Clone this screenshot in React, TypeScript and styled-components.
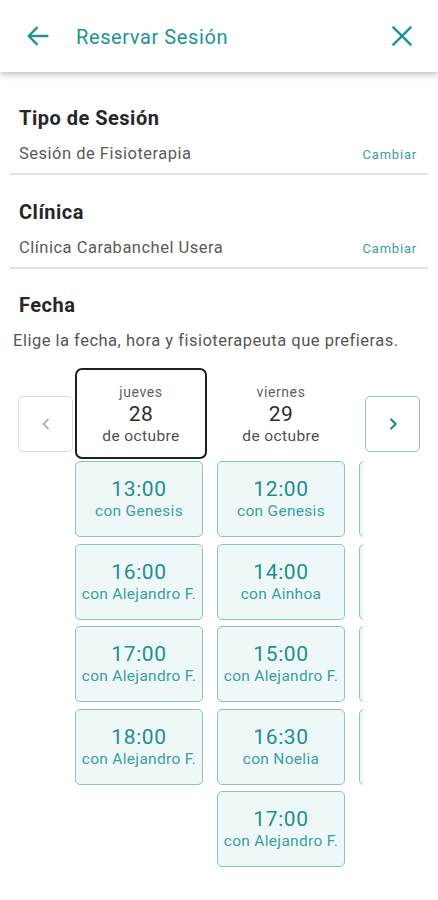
import styled, { createGlobalStyle } from "styled-components"

const GlobalStyle = createGlobalStyle`
body{
    margin: 0;
    background: #ffffff;
    font-family: Roboto, "Noto Sans", Arial, sans-serif;
}
`

type Slot = { time: string; who: string }
type Day = { weekday: string; num: string; month: string; slots: Slot[] }

const days: Day[] = [
    {
        weekday: "jueves", num: "28", month: "de octubre",
        slots: [
            { time: "13:00", who: "con Genesis" },
            { time: "16:00", who: "con Alejandro F." },
            { time: "17:00", who: "con Alejandro F." },
            { time: "18:00", who: "con Alejandro F." },
        ],
    },
    {
        weekday: "viernes", num: "29", month: "de octubre",
        slots: [
            { time: "12:00", who: "con Genesis" },
            { time: "14:00", who: "con Ainhoa" },
            { time: "15:00", who: "con Alejandro F." },
            { time: "16:30", who: "con Noelia" },
            { time: "17:00", who: "con Alejandro F." },
        ],
    },
]

// the next day only peeks in at the right edge, so just its boxes
const peekSlots = 4

const App = () => {
    return (
        <Page>
            <GlobalStyle />
            <Header>
                <IconBtn>
                    <svg width="28" height="28" viewBox="0 0 24 24" fill="none" stroke="#1b9590" strokeWidth="2.1" strokeLinecap="round" strokeLinejoin="round">
                        <path d="M20 12H4.5" />
                        <path d="M11 5l-7 7 7 7" />
                    </svg>
                </IconBtn>
                <Title>Reservar Sesión</Title>
                <IconBtn>
                    <svg width="26" height="26" viewBox="0 0 24 24" fill="none" stroke="#1b9590" strokeWidth="2.2" strokeLinecap="round">
                        <path d="M4 4l16 16M20 4L4 20" />
                    </svg>
                </IconBtn>
            </Header>

            <Section $first>
                <SectionTitle>Tipo de Sesión</SectionTitle>
                <ValueRow>
                    <Value>Sesión de Fisioterapia</Value>
                    <Change>Cambiar</Change>
                </ValueRow>
            </Section>

            <Section>
                <SectionTitle>Clínica</SectionTitle>
                <ValueRow>
                    <Value>Clínica Carabanchel Usera</Value>
                    <Change>Cambiar</Change>
                </ValueRow>
            </Section>

            <DateSection>
                <SectionTitle>Fecha</SectionTitle>
                <Hint>Elige la fecha, hora y fisioterapeuta que prefieras.</Hint>
            </DateSection>

            <Picker>
                <NavBtn $active={false}>
                    <svg width="16" height="16" viewBox="0 0 24 24" fill="none" stroke="#a8a8a8" strokeWidth="2.6" strokeLinecap="round" strokeLinejoin="round">
                        <path d="M15 5l-7 7 7 7" />
                    </svg>
                </NavBtn>
                <Viewport>
                    {days.map((d, i) => (
                        <Column key={d.num}>
                            <DayHead $selected={i === 0}>
                                <Weekday>{d.weekday}</Weekday>
                                <DayNum>{d.num}</DayNum>
                                <Month>{d.month}</Month>
                            </DayHead>
                            {d.slots.map((s, j) => (
                                <SlotBox key={j}>
                                    <Time>{s.time}</Time>
                                    <Who>{s.who}</Who>
                                </SlotBox>
                            ))}
                        </Column>
                    ))}
                    <Column>
                        <DayHead $selected={false} />
                        {Array.from({ length: peekSlots }).map((_, j) => (
                            <SlotBox key={j} />
                        ))}
                    </Column>
                </Viewport>
                <NavBtn $active>
                    <svg width="16" height="16" viewBox="0 0 24 24" fill="none" stroke="#13837f" strokeWidth="3" strokeLinecap="round" strokeLinejoin="round">
                        <path d="M9 5l7 7-7 7" />
                    </svg>
                </NavBtn>
            </Picker>
        </Page>
    )
}

export default App

const Page = styled.div`
width: 438px;
min-height: 900px;
background: #ffffff;
overflow: hidden;
`

const Header = styled.div`
height: 72px;
display: flex;
align-items: center;
padding: 0 22px 0 24px;
background: #ffffff;
box-shadow: 0 3px 6px rgba(0,0,0,0.22);
position: relative;
z-index: 1;
`

const IconBtn = styled.div`
width: 28px;
height: 28px;
display: flex;
align-items: center;
justify-content: center;
`

const Title = styled.div`
flex: 1;
margin-left: 24px;
margin-top: 2px;
font-size: 20px;
letter-spacing: 0.6px;
color: #1b9590;
`

const Section = styled.div<{ $first?: boolean }>`
margin: 0 10px;
padding: ${p => (p.$first ? "34px" : "25px")} 11px 10px 9px;
border-bottom: 2px solid #e2e2e2;
`

const SectionTitle = styled.div`
font-size: 20px;
line-height: 24px;
font-weight: 700;
letter-spacing: 0.5px;
color: #26262b;
`

const ValueRow = styled.div`
display: flex;
align-items: center;
justify-content: space-between;
margin-top: 13px;
height: 20px;
`

const Value = styled.div`
font-size: 16.5px;
letter-spacing: 0.5px;
color: #5a5a5a;
`

const Change = styled.div`
font-size: 13px;
letter-spacing: 0.8px;
color: #3a9e99;
margin-top: 2px;
`

const DateSection = styled.div`
padding: 24px 0 0 19px;
`

const Hint = styled.div`
margin: 14px 0 0 -6px;
font-size: 16.5px;
line-height: 20px;
letter-spacing: 0.5px;
color: #555555;
white-space: nowrap;
`

const Picker = styled.div`
display: flex;
align-items: flex-start;
gap: 2px;
padding: 17px 18px 0 18px;
`

const NavBtn = styled.div<{ $active: boolean }>`
flex: none;
width: 55px;
height: 56px;
margin-top: 28px;
box-sizing: border-box;
border: 1.5px solid ${p => (p.$active ? "#8cc3c0" : "#dcdcdc")};
border-radius: 5px;
display: flex;
align-items: center;
justify-content: center;
background: #ffffff;
`

const Viewport = styled.div`
flex: 1;
display: flex;
gap: 14px;
overflow: hidden;
`

const Column = styled.div`
flex: none;
width: 128px;
display: flex;
flex-direction: column;
gap: 6.5px;
`

const DayHead = styled.div<{ $selected: boolean }>`
flex: none;
height: 91px;
width: ${p => (p.$selected ? "132px" : "128px")};
box-sizing: border-box;
border: 2px solid ${p => (p.$selected ? "#1f1f1f" : "transparent")};
border-radius: 7px;
display: flex;
flex-direction: column;
align-items: center;
justify-content: center;
margin-bottom: -4.5px;
`

const Weekday = styled.div`
font-size: 14px;
line-height: 20px;
letter-spacing: 0.6px;
color: #5f5f5f;
`

const DayNum = styled.div`
font-size: 21px;
line-height: 24px;
letter-spacing: 0.5px;
color: #2e2e2e;
`

const Month = styled.div`
font-size: 15.5px;
line-height: 20px;
letter-spacing: 0.4px;
color: #4f4f4f;
`

const SlotBox = styled.div`
flex: none;
height: 76px;
box-sizing: border-box;
border: 1.5px solid #8cc3c0;
border-radius: 5px;
background: #eef8f9;
display: flex;
flex-direction: column;
align-items: center;
justify-content: center;
`

const Time = styled.div`
font-size: 21px;
line-height: 24px;
letter-spacing: 0.6px;
color: #1f8f8b;
`

const Who = styled.div`
font-size: 15.5px;
line-height: 20px;
letter-spacing: 0.3px;
color: #3d9e99;
white-space: nowrap;
`
